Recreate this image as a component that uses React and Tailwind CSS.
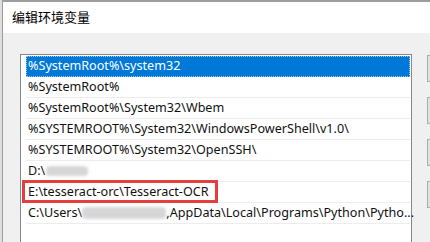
import React from 'react'

const rows = [
  '%SystemRoot%\\system32',
  '%SystemRoot%',
  '%SystemRoot%\\System32\\Wbem',
  '%SYSTEMROOT%\\System32\\WindowsPowerShell\\v1.0\\',
  '%SYSTEMROOT%\\System32\\OpenSSH\\',
]

function Blur({ className }) {
  return <span className={`inline-block bg-[#d6d6d6] rounded-sm blur-[1.5px] ${className}`} />
}

export default function App() {
  return (
    <div
      className="w-[430px] h-[242px] overflow-hidden bg-[#e6e6e6] flex"
      style={{ fontFamily: '"Noto Sans", "Noto Sans CJK SC", sans-serif' }}
    >
      <div className="w-[2px] bg-[#dedede]" />
      <div className="flex-1 flex flex-col border-l border-t-2 border-[#9c9c9c] min-w-0">
        {/* Title bar */}
        <div className="h-[31px] bg-white flex items-center pl-[9px] text-[13px] text-black shrink-0">
          编辑环境变量
        </div>

        {/* Body */}
        <div className="flex-1 bg-[#f0f0f0] flex pt-[21px] pl-[17px] gap-[15px]">
          <div className="w-[392px] h-[200px] bg-white border border-[#828790] pl-[5px] pr-px pt-px shrink-0 text-[12.6px] text-[#111]">
            {rows.map((r, i) => (
              <div
                key={i}
                className={`h-[21px] flex items-center pl-[2px] border-b ${i === 0 ? 'bg-[#0078d7] text-white border-[#0078d7] outline-1 outline-dotted outline-offset-[-1px] outline-[#99c9ef]' : 'border-[#ececec]'}`}
              >
                <span className="whitespace-nowrap">{r}</span>
              </div>
            ))}
            <div className="h-[21px] flex items-center pl-[2px] border-b border-[#ececec]">
              D:\<Blur className="w-[42px] h-[10px] ml-[1px]" />
            </div>
            <div className="relative h-[21px] flex items-center pl-[2px] border-b border-[#ececec]">
              E:\tesseract-orc\Tesseract-OCR
              <div className="absolute left-[-4px] top-[-2px] w-[196px] h-[23px] border-[3px] border-[#e53e3e]" />
            </div>
            <div className="h-[21px] flex items-center pl-[2px] border-b border-[#ececec] whitespace-nowrap">
              <span>C:\Users\</span>
              <Blur className="w-[84px] h-[12px] shrink-0" />
              <span>,AppData\Local\Programs\Python\Pytho...</span>
            </div>
          </div>

          <div className="flex flex-col pt-px gap-[15px]">
            <div className="w-[40px] h-[27px] bg-[#e1e1e1] border border-[#adadad]" />
            <div className="w-[40px] h-[27px] bg-[#e1e1e1] border border-[#adadad]" />
            <div className="w-[40px] h-[27px] bg-[#e1e1e1] border border-[#adadad]" />
            <div className="w-[40px] h-[27px] bg-[#e1e1e1] border border-[#adadad]" />
          </div>
        </div>
      </div>
    </div>
  )
}
